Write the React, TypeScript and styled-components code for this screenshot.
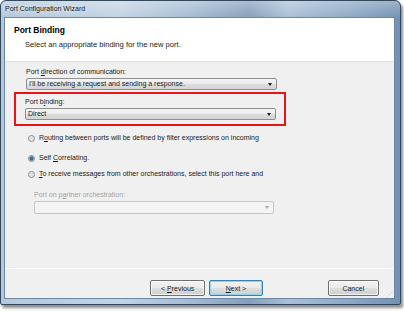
import styled, { createGlobalStyle } from 'styled-components'

const GlobalStyle = createGlobalStyle`
  html, body {
    margin: 0;
    padding: 0;
    background: #fff;
  }
  body {
    font-family: "Liberation Sans", Arial, sans-serif;
    font-size: 7px;
    color: #1a1a1a;
  }
  u {
    text-decoration-thickness: 1px;
    text-underline-offset: 1px;
  }
`;

function ComboBox({ value, disabled }: { value?: string; disabled?: boolean }) {
  return (
    <Combo $disabled={disabled}>
      <ComboValue>{value}</ComboValue>
      <Arrow $disabled={disabled} />
    </Combo>
  );
}

function App() {
  return (
    <>
      <GlobalStyle />
      <Wrap>
        <Frame>
          <TitleBar>Port Configuration Wizard</TitleBar>
          <Client>
            <Header>
              <HeaderTitle>Port Binding</HeaderTitle>
              <HeaderSub>Select an appropriate binding for the new port.</HeaderSub>
            </Header>
            <Body>
              <Field>
                <Label>Port <u>d</u>irection of communication:</Label>
                <ComboBox value="I'll be receiving a request and sending a response." />
              </Field>
              <Highlight>
                <Label>Port b<u>i</u>nding:</Label>
                <ComboBox value="Direct" />
              </Highlight>
              <Radios>
                <RadioRow $gap={7}>
                  <Radio />
                  <span>R<u>o</u>uting between ports will be defined by filter expressions on incoming</span>
                </RadioRow>
                <RadioRow $gap={10}>
                  <Radio $checked />
                  <span>Self <u>C</u>orrelating.</span>
                </RadioRow>
                <RadioRow $gap={6}>
                  <Radio />
                  <span><u>T</u>o receive messages from other orchestrations, select this port here and</span>
                </RadioRow>
              </Radios>
              <Partner>
                <Label $disabled>Port on p<u>a</u>rtner orchestration:</Label>
                <ComboBox disabled />
              </Partner>
            </Body>
            <Footer>
              <Button>&lt; <u>P</u>revious</Button>
              <Button $focused><u>N</u>ext &gt;</Button>
              <Button $spaced>Cancel</Button>
              <Grip>⋰</Grip>
            </Footer>
          </Client>
        </Frame>
      </Wrap>
    </>
  )
}

const Wrap = styled.div`
  width: 404px;
  height: 312px;
  overflow: hidden;
  background: #fff;
`;

const Frame = styled.div`
  width: 401px;
  height: 305px;
  box-sizing: border-box;
  padding: 0 5px 5px 3px;
  display: flex;
  flex-direction: column;
  border: 1px solid #34485c;
  border-radius: 6px 6px 2px 2px;
  background:
    linear-gradient(180deg, rgba(255,255,255,0.3) 0px, rgba(255,255,255,0) 17px),
    linear-gradient(90deg, #b4c8dc 0%, #c2d3e4 30%, #a3bbd2 48%, #859fbb 62%, #a9c0d6 72%, #91acc8 85%, #7392b3 100%);
  box-shadow: 2px 3px 3px rgba(0, 0, 0, 0.45);
`;

const TitleBar = styled.div`
  height: 16px;
  line-height: 16px;
  padding-left: 1px;
  font-size: 7px;
  color: #1a1a1a;
  text-shadow: 0 0 4px rgba(255, 255, 255, 0.9);
  flex: none;
`;

const Client = styled.div`
  flex: 1;
  display: flex;
  flex-direction: column;
  background: #f0f0f0;
  border: 1px solid #6d88a6;
  min-height: 0;
`;

const Header = styled.div`
  height: 44px;
  box-sizing: border-box;
  background: #fff;
  border-bottom: 1px solid #dfdfdf;
  padding: 7px 0 0 9px;
  flex: none;
`;

const HeaderTitle = styled.div`
  font-weight: bold;
  font-size: 8.5px;
  line-height: 11px;
  color: #000;
`;

const HeaderSub = styled.div`
  margin: 4px 0 0 11px;
  line-height: 10px;
  font-size: 7.6px;
`;

const Body = styled.div`
  flex: 1;
  padding: 5px 0 0 9px;
`;

const Field = styled.div`
  width: 251px;
  padding-left: 12px;
  display: flex;
  flex-direction: column;
  gap: 1px;
`;

const Highlight = styled.div`
  width: 251px;
  margin-top: 2px;
  padding: 3px 8px 4px 9px;
  border: 2px solid #e8141c;
  display: flex;
  flex-direction: column;
  gap: 1px;
`;

const Label = styled.div<{ $disabled?: boolean }>`
  line-height: 10px;
  height: 10px;
  color: ${p => (p.$disabled ? '#a3a3a3' : '#1a1a1a')};
`;

const Combo = styled.div<{ $disabled?: boolean }>`
  height: ${p => (p.$disabled ? 13 : 12)}px;
  box-sizing: border-box;
  border: 1px solid ${p => (p.$disabled ? '#c4c8cc' : '#8e8f8f')};
  border-radius: 2px;
  background: ${p =>
    p.$disabled
      ? '#f4f4f4'
      : 'linear-gradient(180deg, #f4f4f4 0%, #ececec 48%, #dcdcdc 52%, #d4d4d4 100%)'};
  display: flex;
  align-items: center;
  padding: 0 4px 0 2px;
`;

const ComboValue = styled.span`
  flex: 1;
  line-height: 10px;
  white-space: nowrap;
  overflow: hidden;
`;

const Arrow = styled.span<{ $disabled?: boolean }>`
  width: 0;
  height: 0;
  border-left: 2.5px solid transparent;
  border-right: 2.5px solid transparent;
  border-top: 3px solid ${p => (p.$disabled ? '#a8a8a8' : '#1e1e1e')};
`;

const Radios = styled.div`
  display: flex;
  flex-direction: column;
  padding-left: 14px;
`;

const RadioRow = styled.div<{ $gap: number }>`
  margin-top: ${p => p.$gap}px;
  height: 10px;
  line-height: 10px;
  display: flex;
  align-items: center;
  gap: 4px;
`;

const Radio = styled.span<{ $checked?: boolean }>`
  width: 7px;
  height: 7px;
  box-sizing: border-box;
  border-radius: 50%;
  border: 1px solid #8a8a8a;
  background: ${p =>
    p.$checked
      ? 'radial-gradient(circle, #2a6fb0 0 1.6px, #7fb4e0 2.2px, #e4e4e4 2.6px)'
      : 'radial-gradient(circle, #e0e0e0 0 1.5px, #f6f6f6 3px)'};
  flex: none;
`;

const Partner = styled.div`
  width: 240px;
  margin-top: 11px;
  padding-left: 20px;
  display: flex;
  flex-direction: column;
  gap: 1px;
`;

const Footer = styled.div`
  position: relative;
  flex: none;
  height: 30px;
  box-sizing: border-box;
  border-top: 1px solid #fff;
  display: flex;
  align-items: flex-start;
  padding: 11px 15px 0 145px;
  gap: 4px;
`;

const Button = styled.button<{ $focused?: boolean; $spaced?: boolean }>`
  font-family: inherit;
  font-size: 7px;
  color: #1a1a1a;
  height: 16px;
  width: ${p => (p.$spaced ? 53 : p.$focused ? 55 : 57)}px;
  margin-left: ${p => (p.$spaced ? 61 : 0)}px;
  padding: 0;
  border-radius: 2px;
  border: 1px solid ${p => (p.$focused ? '#3c7fb1' : '#707070')};
  background: linear-gradient(180deg, #f2f2f2 0%, #ebebeb 48%, #dddddd 52%, #cfcfcf 100%);
  box-shadow: inset 0 0 0 1px ${p => (p.$focused ? '#8fd1f0' : 'rgba(255,255,255,0.7)')};
`;

const Grip = styled.span`
  position: absolute;
  right: 1px;
  bottom: -1px;
  font-size: 7px;
  color: #b0b0b0;
`;

export default App
